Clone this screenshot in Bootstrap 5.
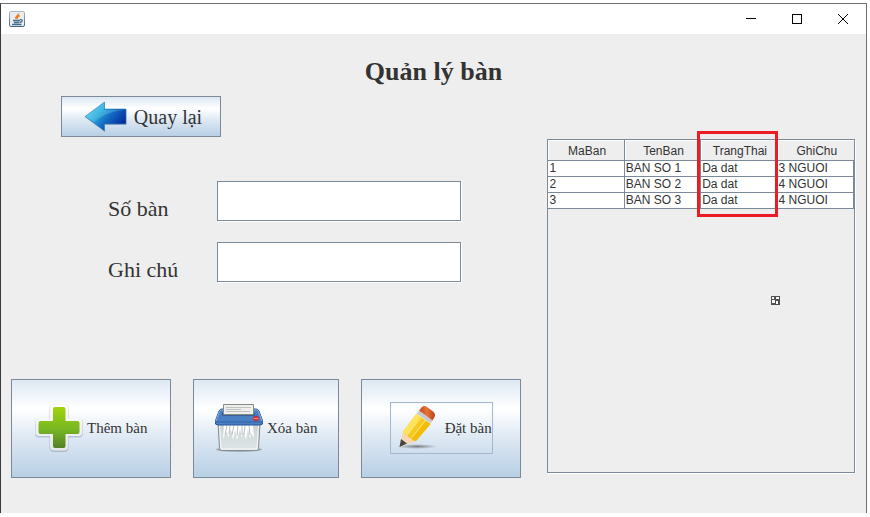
<!DOCTYPE html>
<html lang="vi">
<head>
<meta charset="utf-8">
<meta name="viewport" content="width=device-width, initial-scale=1">
<title>Quản lý bàn</title>
<link rel="stylesheet" href="https://cdn.jsdelivr.net/npm/bootstrap@5.3.0/dist/css/bootstrap.min.css">
<style>
:root { --line: #7a8a99; --ink: #333; --panel: #eee; }
body { background: #fff; color: var(--ink); font-family: "Liberation Serif", "Times New Roman", serif; }
.app-window { min-height: calc(100vh - 7px); margin: 3px 3px 4px 0; border: 1px solid #707073; border-left-color: #3a3a3c; border-bottom: 0; background: var(--panel); }
.title-bar { height: 30px; background: #fff; }
.win-btn { width: 46px; height: 30px; border: 0; background: transparent; padding: 0; }
.win-btn svg { display: block; margin: auto; }
.page-title { font-size: 26px; line-height: 30px; font-weight: 700; padding: 23px 0 9px; margin: 0; }
.workspace { gap: 26px; padding: 0 11px 0 10px; }
.left-side { flex: 511 1 0; min-width: 0; }
.right-side { flex: 308 1 0; min-width: 0; padding-top: 43px; }
.metal-btn { display: flex; align-items: center; justify-content: center; gap: 4px; padding: 0; color: var(--ink); border: 1px solid var(--line); background: linear-gradient(#dde8f3 0%, #fff 30%, #dde8f3 60%, #b8cfe5 100%); white-space: nowrap; }
.back-btn { gap: 6px; width: 160px; height: 41px; font-size: 20px; line-height: 24px; margin-left: 50px; }
.form-area { padding: 44px 60px 0 97px; }
.form-line { display: flex; align-items: flex-end; margin-bottom: 21px; }
.form-line label { flex: 0 0 109px; font-size: 22px; line-height: 24px; }
.form-line input { flex: 1 1 0; min-width: 0; height: 40px; border: 1px solid var(--line); background: #fff; box-shadow: 1px 1px #fff; padding: 0 4px; font-size: 20px; }
.actions { gap: 22px; padding-top: 76px; }
.actions .metal-btn { flex: 160 1 0; height: 99px; padding-bottom: 2px; font-size: 15px; line-height: 18px; }
.actions .metal-btn.narrow { flex-grow: 145; }
.focus-ring-box { display: flex; align-items: center; gap: 4px; border: 1px solid #a3b8cc; padding: 1px 0 1px 2px; }
.scroll-pane { height: 334px; border: 1px solid var(--line); box-shadow: 1px 1px #fff; }
.seat-table { width: 100%; table-layout: fixed; border-collapse: separate; border-spacing: 0; font: 12px/15px "Liberation Sans", Arial, sans-serif; }
.seat-table th { position: relative; height: 21px; padding: 2px 0 0 2px; font-weight: 400; text-align: center; border-right: 1px solid var(--line); border-bottom: 1px solid var(--line); box-shadow: inset 1px 1px #fff; }
.seat-table td { height: 16px; padding: 0 1px; background: #fff; border-right: 1px solid var(--line); border-bottom: 1px solid var(--line); white-space: nowrap; }
.seat-table th:last-child { border-right: 0; }
.highlight { position: absolute; z-index: 2; top: -9px; left: -4px; width: calc(100% + 5px); height: 86px; border: 3px solid #ed1c24; pointer-events: none; }
.drag-mark { position: absolute; left: 73%; top: 156px; }
</style>
<script src="https://cdn.jsdelivr.net/npm/bootstrap@5.3.0/dist/js/bootstrap.bundle.min.js"></script>
</head>
<body>
<div class="app-window">
  <header class="title-bar d-flex align-items-center justify-content-between">
    <svg class="ms-2" width="16" height="16" viewBox="0 0 16 16" aria-hidden="true">
      <defs><linearGradient id="jv" x2="0" y2="1"><stop stop-color="#a9b9c6"/><stop offset="1" stop-color="#48637a"/></linearGradient></defs>
      <rect x=".5" y=".5" width="15" height="15" rx="1.5" fill="#e9edf1" stroke="url(#jv)"/>
      <path d="M9.500 2.500C10 5 5.500 5 7 8M10.800 4.800C8 5.500 8.200 6.500 8.500 8" fill="none" stroke="#ee7f1b" stroke-width="1.500"/>
      <path d="M4 9.500H11M5 11.500H10.500M3 13.500H12.500M11 8.700C14.500 8 13.500 11.200 11 11.500" fill="none" stroke="#466d89" stroke-width="1.300"/>
    </svg>
    <div class="d-flex">
      <button class="win-btn" type="button" aria-label="Minimize"><svg width="10" height="10"><path d="M0 4.500H10" stroke="#000"/></svg></button>
      <button class="win-btn" type="button" aria-label="Maximize"><svg width="10" height="10"><rect x=".5" y=".5" width="9" height="9" fill="none" stroke="#000"/></svg></button>
      <button class="win-btn" type="button" aria-label="Close"><svg width="10" height="10"><path d="M0 0L10 10M10 0L0 10" stroke="#000"/></svg></button>
    </div>
  </header>

  <main>
    <h1 class="page-title text-center">Quản lý bàn</h1>
    <div class="workspace d-flex align-items-start">
      <section class="left-side">
        <button class="metal-btn back-btn" type="button">
          <svg width="48" height="34" viewBox="0 0 48 34" aria-hidden="true">
            <defs><linearGradient id="ar" x1="0" y1=".2" x2="1" y2=".8"><stop stop-color="#5cdcf0"/><stop offset=".35" stop-color="#27a0d8"/><stop offset=".6" stop-color="#1264bf"/><stop offset="1" stop-color="#001f92"/></linearGradient></defs>
            <path d="M5 17L25 2V9.500H46.500V25H25V32Z" fill="#526e88" opacity=".4"/>
            <path d="M5 16.500L24.500 2V9H46V24H24.500V31Z" fill="url(#ar)" stroke="#3a83b4" stroke-width=".6"/>
            <path d="M6 16.500L24 3V10H45C32 11 22 15 14 22Z" fill="#8cecfa" opacity=".25"/>
          </svg>
          <span>Quay lại</span>
        </button>

        <form class="form-area">
          <div class="form-line"><label for="seatNo">Số bàn</label><input id="seatNo" type="text"></div>
          <div class="form-line"><label for="note">Ghi chú</label><input id="note" type="text"></div>
        </form>

        <div class="actions d-flex">
          <button class="metal-btn" type="button">
            <svg width="48" height="48" viewBox="0 0 48 48" aria-hidden="true">
              <defs><linearGradient id="gp" x2="0" y2="1"><stop stop-color="#a1d40d"/><stop offset=".55" stop-color="#78b624"/><stop offset="1" stop-color="#528126"/></linearGradient>
              <linearGradient id="gw" x2="0" y2="1"><stop stop-color="#fff"/><stop offset="1" stop-color="#e6e6e6"/></linearGradient></defs>
              <path d="M19 0H29Q33.500 0 33.500 4.500V14.500H43.500Q48 14.500 48 19V28.500Q48 33 43.500 33H33.500V43Q33.500 47.500 29 47.500H19Q14.500 47.500 14.500 43V33H4.500Q0 33 0 28.500V19Q0 14.500 4.500 14.500H14.500V4.500Q14.500 0 19 0Z" fill="#8093a7" opacity=".45" transform="translate(0 .5)"/>
              <path d="M19 .3H29Q33 .3 33 4.500V15H43.500Q47.500 15 47.500 19V28Q47.500 32 43.500 32H33V42.500Q33 46.500 29 46.500H19Q15 46.500 15 42.500V32H4.500Q.5 32 .5 28V19Q.5 15 4.500 15H15V4.500Q15 .3 19 .3Z" fill="url(#gw)"/>
              <path d="M20 3H28.500Q30.500 3 30.500 5V17H42.500Q44.500 17 44.500 19V28Q44.500 30 42.500 30H30.500V42Q30.500 44 28.500 44H20Q18 44 18 42V30H5.500Q3.500 30 3.500 28V19Q3.500 17 5.500 17H18V5Q18 3 20 3Z" fill="url(#gp)"/>
            </svg>
            <span>Thêm bàn</span>
          </button>

          <button class="metal-btn narrow" type="button">
            <svg width="48" height="48" viewBox="0 0 48 48" aria-hidden="true">
              <defs><linearGradient id="sb" x2="0" y2="1"><stop stop-color="#cbd3d5"/><stop offset="1" stop-color="#dfe5e6"/></linearGradient></defs>
              <ellipse cx="24" cy="45.500" rx="23" ry="2.500" fill="#506070" opacity=".4"/>
              <path d="M3 19H45L43.500 44Q43.500 46.500 41 46.500H7Q4.500 46.500 4.500 44Z" fill="url(#sb)" stroke="#858d8d"/>
              <path d="M4.500 20H43.500L42 45H6Z" fill="none" stroke="#f7f9f8"/>
              <path d="M9 21H38L39 34L36 29L35 35L33 25L31 36L28 27L27 35L25 25L22 36L20 26L18 36L16 25L13 34L12 27L8 35Z" fill="#fff"/>
              <path d="M12 21L10 31M15 21L14 30M19 21L17 31M23 21L22 32M27 21V31M30 21L29 31M34 21L35 31" stroke="#a9b0b1" stroke-width=".8"/>
              <path d="M4 7Q5 5 7 5H41Q43 5 44 7L48 18Q48 21 45 21H3Q0 21 0 18Z" fill="#4a7fc3" stroke="#28569b"/>
              <path d="M1 17L4.500 7.500Q5 6 7 6H41Q43 6 43.500 7.500L47 17" fill="none" stroke="#85afe2"/>
              <path d="M1 18H47" stroke="#3262a5"/>
              <rect x="7" y="9" width="33" height="2.500" rx="1" fill="#27466f"/>
              <path d="M8.500 .5H38.500V10.500H8.500Z" fill="#eeefed" stroke="#858983"/>
              <path d="M11 3.500H36M11 5.500H26M11 7.500H35" stroke="#bfc3bf"/>
              <ellipse cx="41" cy="14.500" rx="3" ry="2.300" fill="#e33131" stroke="#a62732" stroke-width=".6"/><path d="M38.500 14.500H43.500" stroke="#ffacac" stroke-width=".7"/>
            </svg>
            <span>Xóa bàn</span>
          </button>

          <button class="metal-btn" type="button">
            <span class="focus-ring-box">
              <svg width="48" height="48" viewBox="0 0 48 48" aria-hidden="true">
                <defs><radialGradient id="sh"><stop stop-color="#555" stop-opacity=".75"/><stop offset="1" stop-color="#777" stop-opacity="0"/></radialGradient><linearGradient id="er"><stop stop-color="#c9481b"/><stop offset=".5" stop-color="#e47535"/><stop offset="1" stop-color="#bc3e17"/></linearGradient></defs>
                <ellipse cx="24" cy="42.500" rx="21" ry="2.500" fill="url(#sh)"/>
                <g transform="translate(-1 0)">
                <path d="M7.500 43L11 27.500L24 37Z" fill="#f8d7b5"/>
                <path d="M7.500 43L9 35L15 39.500Z" fill="#4b4643"/>
                <path d="M11 27.500L25 9L39 19.500L24 37Q21 37.500 19.500 34.500Q16 34 15.500 31Q12 31 11 27.500Z" fill="#f7c91f"/>
                <path d="M11 27.500L25 9L29 12L15.500 31Q12 31 11 27.500Z" fill="#ffe45b"/>
                <path d="M19.500 34.500L34.500 16L39 19.500L24 37Q21 37 19.500 34.500Z" fill="#f2bd09"/>
                <path d="M16 30L30 12.500M20 33.500L34 15.500" stroke="#fff19c" stroke-width=".8"/>
                <path d="M24.500 9.500L27 6.500L41 16.500L38.500 19.500Z" fill="#c4c9d2" stroke="#eef0f5" stroke-width=".6"/>
                <path d="M27 6.500L29.500 3.500Q32 1 35 3L41 7.500Q44 10 42.500 13L40.500 16.500Z" fill="url(#er)"/>
                </g>
              </svg>
              <span>Đặt bàn</span>
            </span>
          </button>
        </div>
      </section>

      <section class="right-side">
        <div class="scroll-pane position-relative">
          <table class="seat-table">
            <thead><tr><th scope="col">MaBan</th><th scope="col">TenBan</th><th scope="col">TrangThai<span class="highlight"></span></th><th scope="col">GhiChu</th></tr></thead>
            <tbody>
              <tr><td>1</td><td>BAN SO 1</td><td>Da dat</td><td>3 NGUOI</td></tr>
              <tr><td>2</td><td>BAN SO 2</td><td>Da dat</td><td>4 NGUOI</td></tr>
              <tr><td>3</td><td>BAN SO 3</td><td>Da dat</td><td>4 NGUOI</td></tr>
            </tbody>
          </table>
          <svg class="drag-mark" width="9" height="9" shape-rendering="crispEdges" aria-hidden="true"><path d="M0 0H9V9H0Z" fill="#505050"/><path d="M1 1H3V3H1ZM5 1H8V3H5ZM1 4H4V7H1ZM5 5H7V8H5Z" fill="#fff"/></svg>
        </div>
      </section>
    </div>
  </main>
</div>
</body>
</html>
